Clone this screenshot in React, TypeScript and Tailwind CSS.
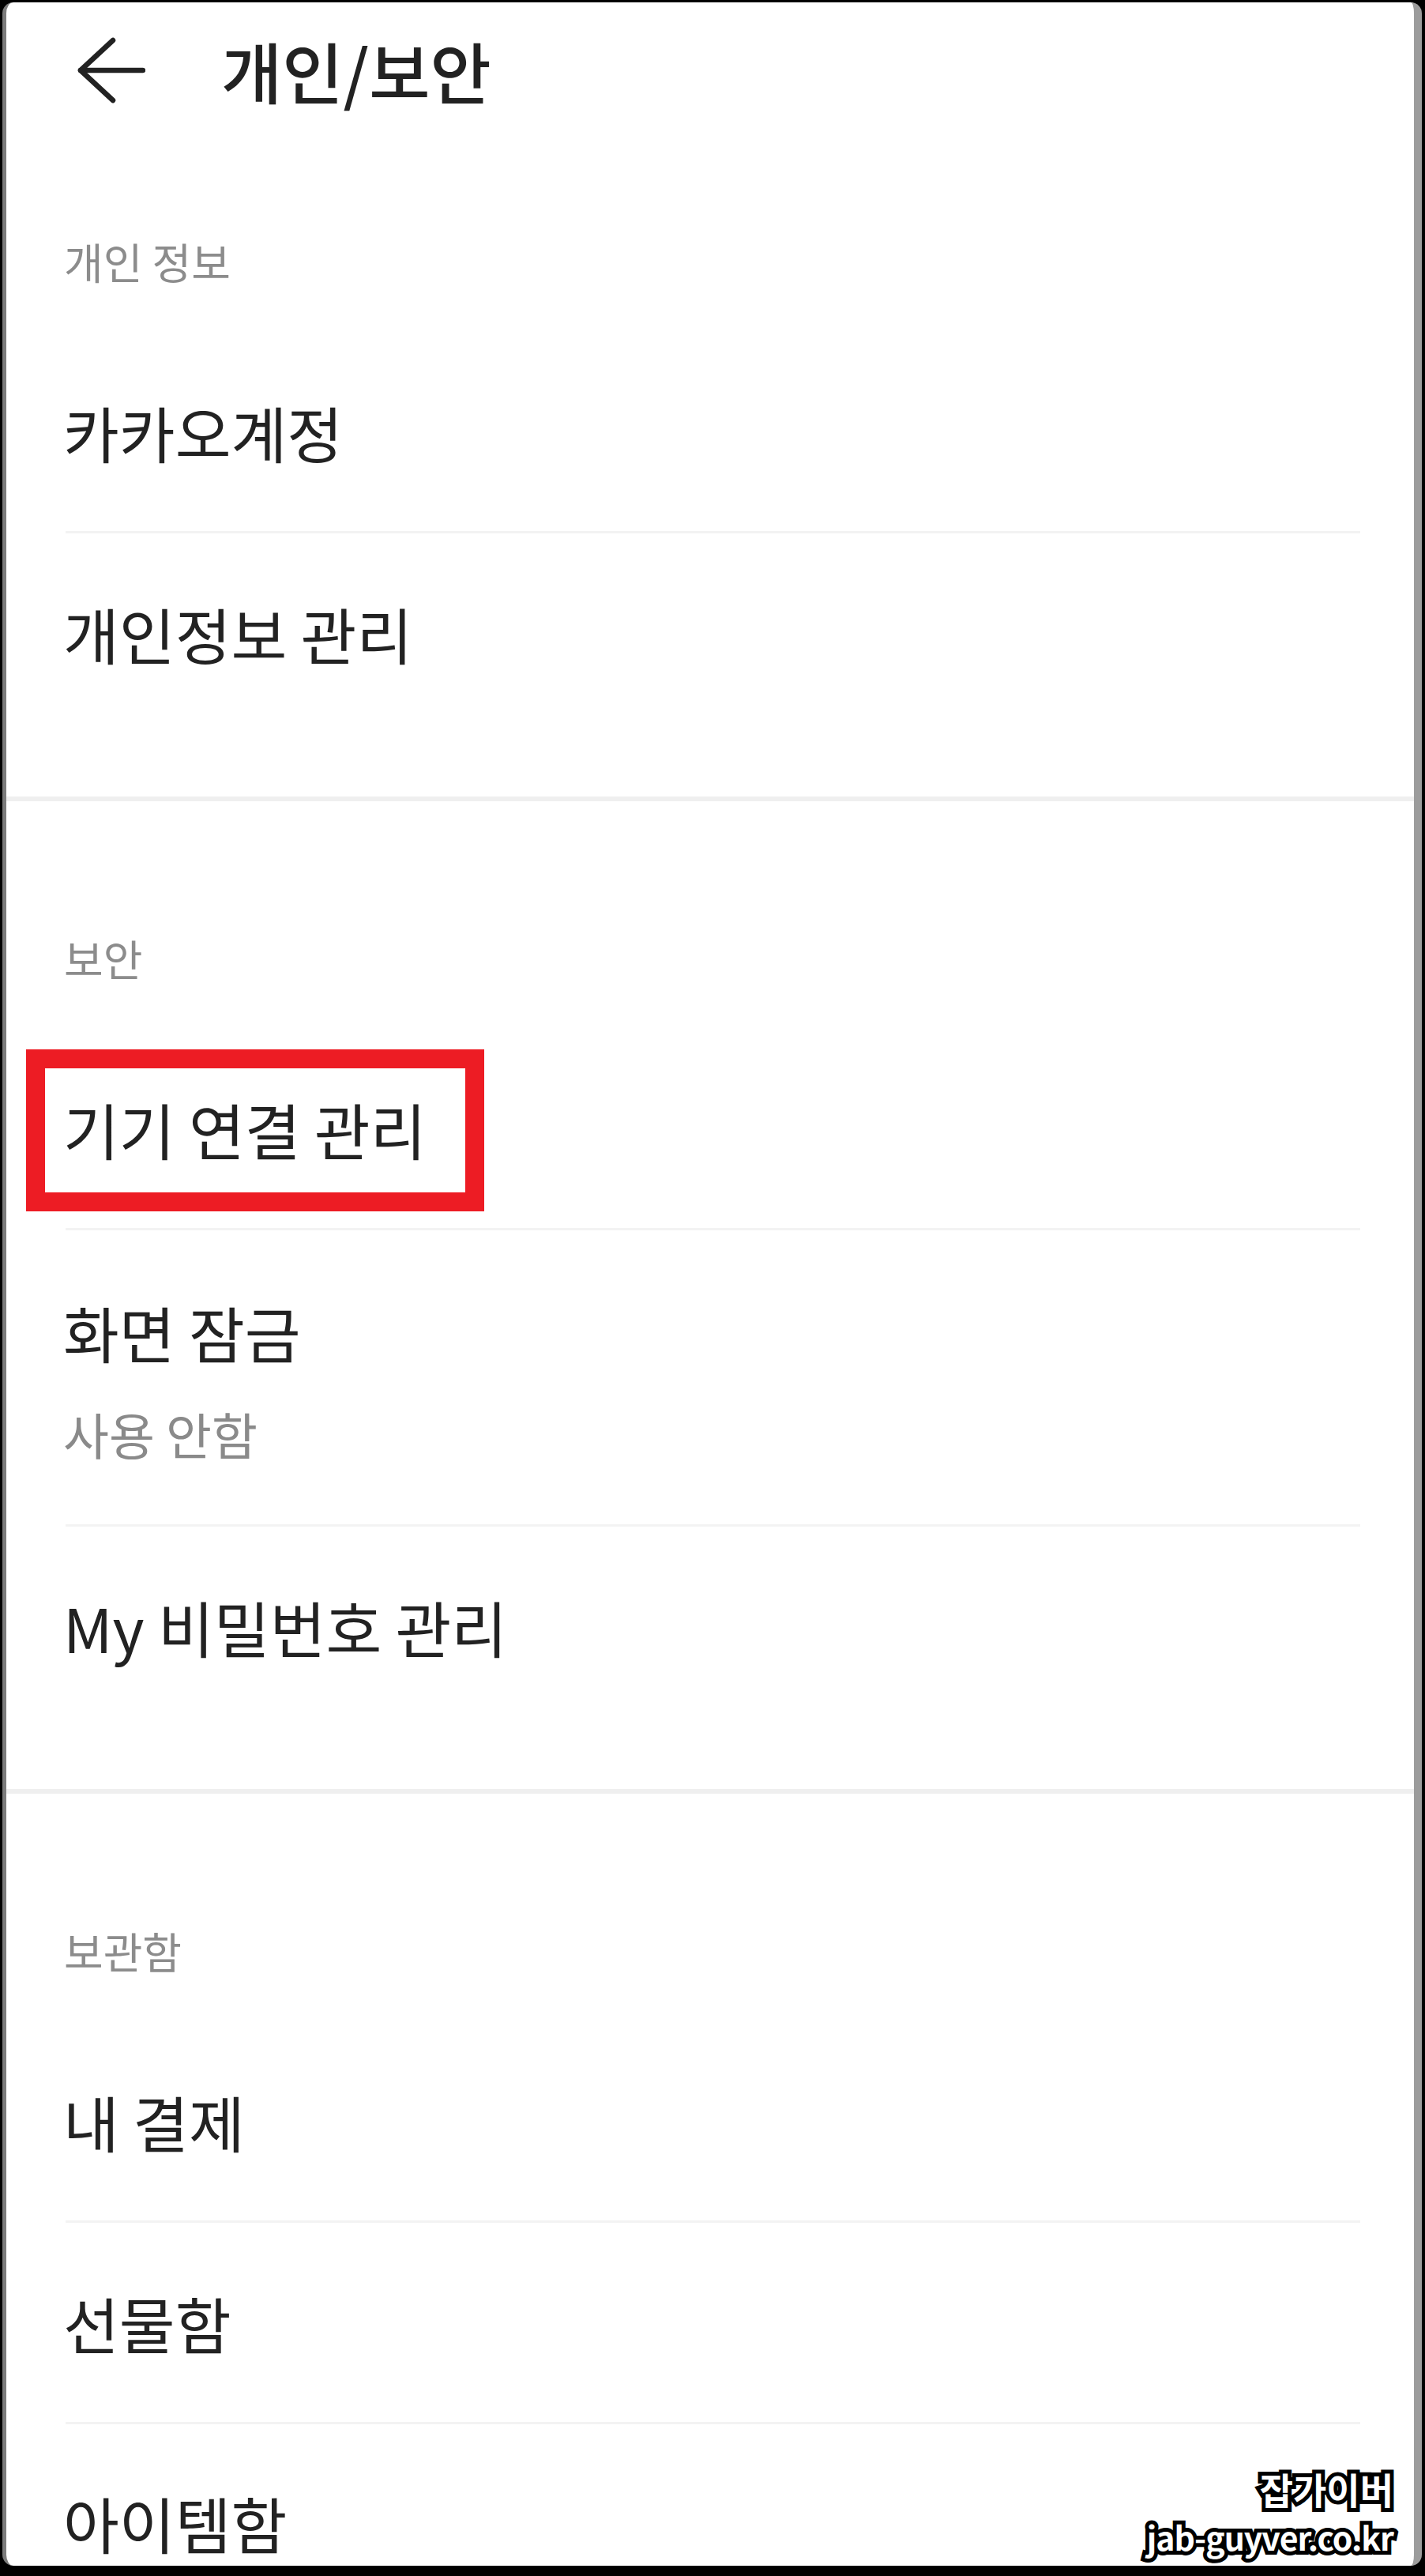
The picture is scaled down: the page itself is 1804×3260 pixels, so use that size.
import React from 'react';

const FONT = "font-['Noto_Sans_CJK_KR','Noto_Sans',sans-serif]";

const BackArrow = () => (
    <svg width="86" height="84" viewBox="0 0 86 84" fill="none" stroke="#222" strokeWidth="6.5" strokeLinecap="round" strokeLinejoin="round">
        <path d="M83 42H4" />
        <path d="M45 4L4 42L45 80" />
    </svg>
);

const Divider = () => <div className="h-[3px] ml-[75px] mr-[68px] bg-[#f3f3f3]" />;

const SectionGap = () => <div className="h-[6px] bg-[#efefef]" />;

const Label = ({ text }: { text: string }) => (
    <div className="h-[178px] flex items-center pl-[73px] text-[54px] leading-none text-[#8c8c8c]">{text}</div>
);

const Row = ({ text, children }: { text: string; children?: React.ReactNode }) => (
    <div className="relative h-[252px] flex items-center pl-[72px] text-[77px] leading-none text-[#222]">
        {text}
        {children}
    </div>
);

export default function App() {
    return (
        <div className="w-[1804px] h-[3260px] bg-black pt-[3px] pl-[3px] pr-[4px] pb-[13px]">
            <div className={`relative h-full overflow-hidden rounded-[14px] bg-white border-l-[5px] border-r-[10px] border-l-[#7c7c7c] border-r-[#9c9c9c] ${FONT}`}>
                <div className="h-[172px] flex items-center pl-[90px]">
                    <BackArrow />
                    <span className="ml-[96px] text-[84px] font-medium leading-none text-[#222]">개인/보안</span>
                </div>

                <div className="pt-[67px] pb-[81px]">
                    <Label text="개인 정보" />
                    <Row text="카카오계정" />
                    <Divider />
                    <Row text="개인정보 관리" />
                </div>
                <SectionGap />

                <div className="pt-[110px] pb-[80px]">
                    <Label text="보안" />
                    <Row text="기기 연결 관리">
                        <div className="absolute left-[25px] top-[26px] w-[580px] h-[205px] border-[24px] border-[#ed1c24]" />
                    </Row>
                    <Divider />
                    <div className="h-[372px] flex flex-col pl-[72px] pt-[88px]">
                        <span className="h-[80px] flex items-center text-[77px] leading-none text-[#222]">화면 잠금</span>
                        <span className="mt-[56px] h-[64px] flex items-center text-[63px] leading-none text-[#8a8a8a]">사용 안함</span>
                    </div>
                    <Divider />
                    <Row text="My 비밀번호 관리" />
                </div>
                <SectionGap />

                <div className="pt-[110px]">
                    <Label text="보관함" />
                    <Row text="내 결제" />
                    <Divider />
                    <Row text="선물함" />
                    <Divider />
                    <div className="pt-[86px] pl-[72px] text-[77px] leading-none text-[#222]">아이템함</div>
                </div>

                <div className="absolute right-[26px] bottom-[16px] flex flex-col items-end leading-none text-white font-bold [-webkit-text-stroke:10px_black] [paint-order:stroke_fill]">
                    <span className="text-[46px]">잡가이버</span>
                    <span className="mt-[18px] text-[41px] tracking-[-1px]">jab-guyver.co.kr</span>
                </div>
            </div>
        </div>
    );
}
